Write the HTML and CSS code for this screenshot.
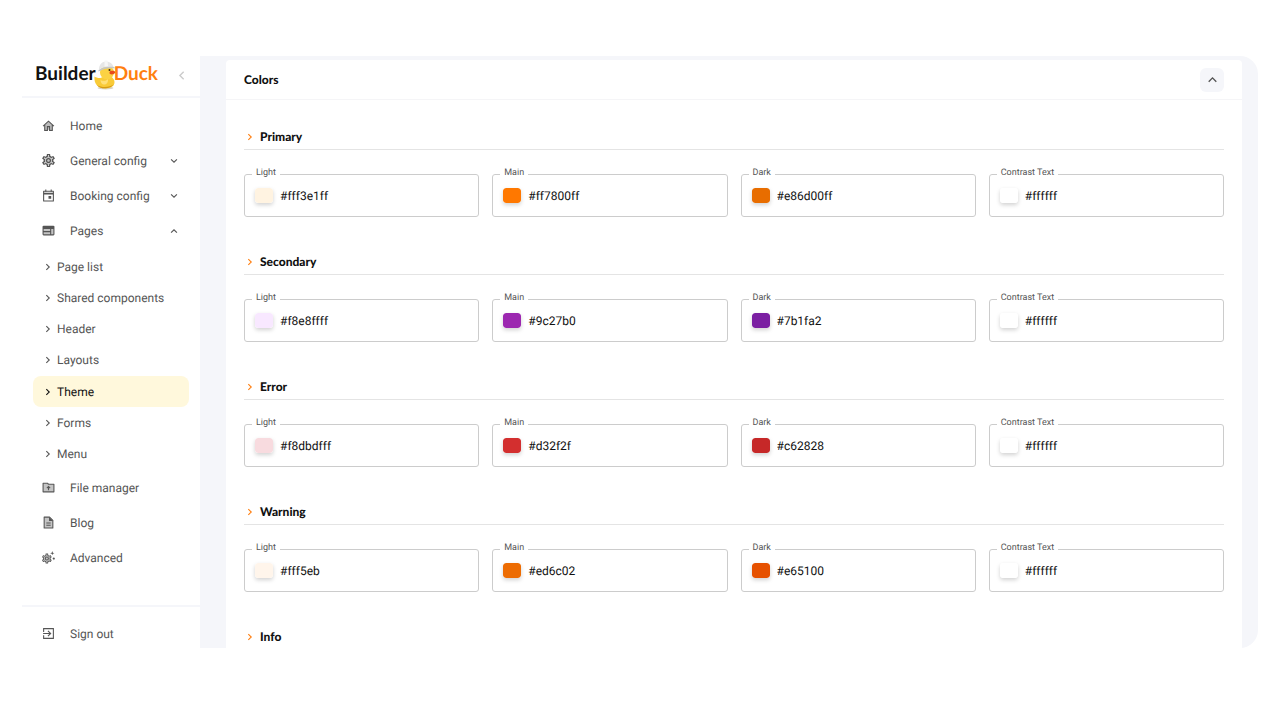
FILE: index.html
```
<!DOCTYPE html>
<html lang="en">
<head>
    <meta charset="UTF-8">
    <meta name="viewport" content="width=device-width, initial-scale=1.0">
    <title>BuilderDuck - Theme</title>
    <link rel="stylesheet" href="styles.css">
</head>
<body>
    <svg class="sprite" aria-hidden="true">
        <symbol id="chevron" viewBox="0 0 24 24">
            <path d="M8 5l7 7-7 7" fill="none" stroke="currentColor" stroke-width="2.600"/>
        </symbol>
        <symbol id="gear" viewBox="0 0 24 24">
            <path fill="currentColor" d="M19.43 12.98c.04-.32.07-.64.07-.98 0-.34-.03-.66-.07-.98l2.11-1.65c.19-.15.24-.42.12-.64l-2-3.46c-.09-.16-.26-.25-.44-.25-.06 0-.12.01-.17.03l-2.49 1c-.52-.4-1.08-.73-1.69-.98l-.38-2.65C14.46 2.18 14.25 2 14 2h-4c-.25 0-.46.18-.49.42l-.38 2.65c-.61.25-1.17.59-1.69.98l-2.49-1c-.06-.02-.12-.03-.18-.03-.17 0-.34.09-.43.25l-2 3.46c-.13.22-.07.49.12.64l2.11 1.65c-.04.32-.07.65-.07.98 0 .33.03.66.07.98l-2.11 1.65c-.19.15-.24.42-.12.64l2 3.46c.09.16.26.25.44.25.06 0 .12-.01.17-.03l2.49-1c.52.4 1.08.73 1.69.98l.38 2.65c.03.24.24.42.49.42h4c.25 0 .46-.18.49-.42l.38-2.65c.61-.25 1.17-.59 1.69-.98l2.49 1c.06.02.12.03.18.03.17 0 .34-.09.43-.25l2-3.46c.12-.22.07-.49-.12-.64l-2.11-1.65zm-1.98-1.71c.04.31.05.52.05.73 0 .21-.02.43-.05.73l-.14 1.13.89.7 1.08.84-.7 1.21-1.27-.51-1.04-.42-.9.68c-.43.32-.84.56-1.25.73l-1.06.43-.16 1.13-.2 1.35h-1.4l-.19-1.35-.16-1.13-1.06-.43c-.43-.18-.83-.41-1.23-.71l-.91-.7-1.06.43-1.27.51-.7-1.21 1.08-.84.89-.7-.14-1.13c-.03-.31-.05-.54-.05-.74s.02-.43.05-.73l.14-1.13-.89-.7-1.08-.84.7-1.21 1.27.51 1.04.42.9-.68c.43-.32.84-.56 1.25-.73l1.06-.43.16-1.13.2-1.35h1.39l.19 1.35.16 1.13 1.06.43c.43.18.83.41 1.23.71l.91.7 1.06-.43 1.27-.51.7 1.21-1.07.85-.89.7.14 1.13zM12 8c-2.21 0-4 1.79-4 4s1.79 4 4 4 4-1.79 4-4-1.79-4-4-4zm0 6c-1.1 0-2-.9-2-2s.9-2 2-2 2 .9 2 2-.9 2-2 2z"/>
        </symbol>
    </svg>

    <div class="app">
        <aside class="sidebar">
            <div class="brand">
                <a class="logo" href="#" aria-label="BuilderDuck">
                    <span>Builder</span>
                    <svg class="duck" viewBox="0 0 44 60" aria-hidden="true">
                        <ellipse cx="23" cy="56" rx="16" ry="3" fill="#d9d4c4"/>
                        <path d="M1 33c5 3 10 4 14 2l20-1c6 4 8 11 4 17-6 7-25 8-32 1C2 47 0 40 1 33z" fill="#f9cb38"/>
                        <path d="M6 50c9 6 26 5 33-1-5 9-27 11-33 1z" fill="#d49a17"/>
                        <path d="M13 40c5 3 11 2 15-2 1 7-3 11-8 11-4 0-7-4-7-9z" fill="#ffe078"/>
                        <circle cx="26" cy="25" r="14" fill="#fbd243"/>
                        <path d="M33 22c4-1 8 0 10 2-1 4-7 6-11 4-2-2-1-5 1-6z" fill="#e8491d"/>
                        <circle cx="31" cy="20" r="2" fill="#38250c"/>
                        <path d="M10 19C10 9 16 3 24 3c8 0 14 5 15 12-8-2-19-1-29 4z" fill="#e6e6e6"/>
                        <path d="M9 20c8-6 21-8 32-6v3c-11-2-22 0-32 6z" fill="#c4c6c8"/>
                        <path d="M21 1h6l1 11-7 1z" fill="#f6f6f6"/>
                    </svg>
                    <span class="logo-accent">Duck</span>
                </a>
                <button class="collapse" type="button" aria-label="Collapse menu">
                    <svg class="chevron left" aria-hidden="true"><use href="#chevron"/></svg>
                </button>
            </div>

            <nav class="menu">
                <a class="menu-item" href="#">
                    <svg class="icon" viewBox="0 0 24 24" aria-hidden="true">
                        <path d="M12 4l7 6v10H5V10z" fill="#bbb"/>
                        <path d="M2 13L12 4l10 9M5 10v11h5v-7h4v7h5V10" fill="none" stroke="currentColor" stroke-width="2"/>
                    </svg>
                    Home
                </a>
                <button class="menu-item" type="button" aria-expanded="false">
                    <svg class="icon" viewBox="2 2 20 20" aria-hidden="true">
                        <circle cx="12" cy="12" r="7" fill="#c4c4c4"/>
                        <use href="#gear" width="24" height="24"/>
                    </svg>
                    General config
                    <svg class="chevron down" aria-hidden="true"><use href="#chevron"/></svg>
                </button>
                <button class="menu-item" type="button" aria-expanded="false">
                    <svg class="icon" viewBox="0 0 24 24" aria-hidden="true">
                        <path d="M3 4h18v18H3z" fill="none" stroke="currentColor" stroke-width="2" stroke-linejoin="round"/>
                        <path d="M3 7h18v3H3zM6 1h2v4H6zM16 1h2v4h-2zM12 13h5v5h-5z" fill="currentColor"/>
                    </svg>
                    Booking config
                    <svg class="chevron down" aria-hidden="true"><use href="#chevron"/></svg>
                </button>
                <button class="menu-item" type="button" aria-expanded="true">
                    <svg class="icon" viewBox="0 0 24 24" aria-hidden="true">
                        <rect x="1" y="3" width="22" height="18" rx="2" fill="currentColor"/>
                        <path d="M3 9h12v4H3zM3 15h12v4H3zM17 9h4v10h-4z" fill="#c4c4c4"/>
                    </svg>
                    Pages
                    <svg class="chevron up" aria-hidden="true"><use href="#chevron"/></svg>
                </button>
                <div class="submenu">
                    <a class="submenu-item" href="#"><svg class="chevron" aria-hidden="true"><use href="#chevron"/></svg>Page list</a>
                    <a class="submenu-item" href="#"><svg class="chevron" aria-hidden="true"><use href="#chevron"/></svg>Shared components</a>
                    <a class="submenu-item" href="#"><svg class="chevron" aria-hidden="true"><use href="#chevron"/></svg>Header</a>
                    <a class="submenu-item" href="#"><svg class="chevron" aria-hidden="true"><use href="#chevron"/></svg>Layouts</a>
                    <a class="submenu-item active" href="#" aria-current="page"><svg class="chevron" aria-hidden="true"><use href="#chevron"/></svg>Theme</a>
                    <a class="submenu-item" href="#"><svg class="chevron" aria-hidden="true"><use href="#chevron"/></svg>Forms</a>
                    <a class="submenu-item" href="#"><svg class="chevron" aria-hidden="true"><use href="#chevron"/></svg>Menu</a>
                </div>
                <a class="menu-item" href="#">
                    <svg class="icon" viewBox="0 0 24 24" aria-hidden="true">
                        <path d="M2 4h8l2 2h10v14H2z" fill="#c4c4c4" stroke="currentColor" stroke-width="2" stroke-linejoin="round"/>
                        <path d="M12 17v-6M9 13l3-3 3 3" fill="none" stroke="currentColor" stroke-width="2"/>
                    </svg>
                    File manager
                </a>
                <a class="menu-item" href="#">
                    <svg class="icon" viewBox="0 0 24 24" aria-hidden="true">
                        <path d="M4 2h10l6 6v14H4z" fill="#c4c4c4" stroke="currentColor" stroke-width="2" stroke-linejoin="round"/>
                        <path d="M13 2v7h7zM8 12h8v2H8zM8 16h8v2H8z" fill="currentColor"/>
                    </svg>
                    Blog
                </a>
                <a class="menu-item" href="#">
                    <svg class="icon" viewBox="0 0 24 24" aria-hidden="true">
                        <circle cx="9" cy="14" r="6" fill="#c4c4c4"/>
                        <use href="#gear" x="-2" y="3" width="22" height="22"/>
                        <path d="M19 0l1 3 3 1-3 1-1 3-1-3-3-1 3-1zM22 11l1 2 1 1-1 1-1 2-1-2-2-1 2-1z" fill="currentColor"/>
                    </svg>
                    Advanced
                </a>
            </nav>

            <div class="sidebar-footer">
                <a class="menu-item" href="#">
                    <svg class="icon" viewBox="0 0 24 24" aria-hidden="true">
                        <path d="M3 9V3h18v18H3v-6" fill="none" stroke="currentColor" stroke-width="2"/>
                        <path d="M2 12h13M11 7l5 5-5 5" fill="none" stroke="currentColor" stroke-width="2"/>
                    </svg>
                    Sign out
                </a>
            </div>
        </aside>

        <main class="content">
            <section class="card">
                <header class="card-header">
                    <h2>Colors</h2>
                    <button class="toggle" type="button" aria-label="Collapse colors">
                        <svg class="chevron up" aria-hidden="true"><use href="#chevron"/></svg>
                    </button>
                </header>

                <div class="card-body">
                    <section class="palette">
                        <h3><svg class="chevron" aria-hidden="true"><use href="#chevron"/></svg>Primary</h3>
                        <div class="fields">
                            <div class="field">
                                <label for="primary-light">Light</label>
                                <input type="color" value="#fff3e1" aria-label="Pick primary light">
                                <input type="text" id="primary-light" value="#fff3e1ff">
                            </div>
                            <div class="field">
                                <label for="primary-main">Main</label>
                                <input type="color" value="#ff7800" aria-label="Pick primary main">
                                <input type="text" id="primary-main" value="#ff7800ff">
                            </div>
                            <div class="field">
                                <label for="primary-dark">Dark</label>
                                <input type="color" value="#e86d00" aria-label="Pick primary dark">
                                <input type="text" id="primary-dark" value="#e86d00ff">
                            </div>
                            <div class="field">
                                <label for="primary-contrast">Contrast Text</label>
                                <input type="color" value="#ffffff" aria-label="Pick primary contrast text">
                                <input type="text" id="primary-contrast" value="#ffffff">
                            </div>
                        </div>
                    </section>

                    <section class="palette">
                        <h3><svg class="chevron" aria-hidden="true"><use href="#chevron"/></svg>Secondary</h3>
                        <div class="fields">
                            <div class="field">
                                <label for="secondary-light">Light</label>
                                <input type="color" value="#f8e8ff" aria-label="Pick secondary light">
                                <input type="text" id="secondary-light" value="#f8e8ffff">
                            </div>
                            <div class="field">
                                <label for="secondary-main">Main</label>
                                <input type="color" value="#9c27b0" aria-label="Pick secondary main">
                                <input type="text" id="secondary-main" value="#9c27b0">
                            </div>
                            <div class="field">
                                <label for="secondary-dark">Dark</label>
                                <input type="color" value="#7b1fa2" aria-label="Pick secondary dark">
                                <input type="text" id="secondary-dark" value="#7b1fa2">
                            </div>
                            <div class="field">
                                <label for="secondary-contrast">Contrast Text</label>
                                <input type="color" value="#ffffff" aria-label="Pick secondary contrast text">
                                <input type="text" id="secondary-contrast" value="#ffffff">
                            </div>
                        </div>
                    </section>

                    <section class="palette">
                        <h3><svg class="chevron" aria-hidden="true"><use href="#chevron"/></svg>Error</h3>
                        <div class="fields">
                            <div class="field">
                                <label for="error-light">Light</label>
                                <input type="color" value="#f8dbdf" aria-label="Pick error light">
                                <input type="text" id="error-light" value="#f8dbdfff">
                            </div>
                            <div class="field">
                                <label for="error-main">Main</label>
                                <input type="color" value="#d32f2f" aria-label="Pick error main">
                                <input type="text" id="error-main" value="#d32f2f">
                            </div>
                            <div class="field">
                                <label for="error-dark">Dark</label>
                                <input type="color" value="#c62828" aria-label="Pick error dark">
                                <input type="text" id="error-dark" value="#c62828">
                            </div>
                            <div class="field">
                                <label for="error-contrast">Contrast Text</label>
                                <input type="color" value="#ffffff" aria-label="Pick error contrast text">
                                <input type="text" id="error-contrast" value="#ffffff">
                            </div>
                        </div>
                    </section>

                    <section class="palette">
                        <h3><svg class="chevron" aria-hidden="true"><use href="#chevron"/></svg>Warning</h3>
                        <div class="fields">
                            <div class="field">
                                <label for="warning-light">Light</label>
                                <input type="color" value="#fff5eb" aria-label="Pick warning light">
                                <input type="text" id="warning-light" value="#fff5eb">
                            </div>
                            <div class="field">
                                <label for="warning-main">Main</label>
                                <input type="color" value="#ed6c02" aria-label="Pick warning main">
                                <input type="text" id="warning-main" value="#ed6c02">
                            </div>
                            <div class="field">
                                <label for="warning-dark">Dark</label>
                                <input type="color" value="#e65100" aria-label="Pick warning dark">
                                <input type="text" id="warning-dark" value="#e65100">
                            </div>
                            <div class="field">
                                <label for="warning-contrast">Contrast Text</label>
                                <input type="color" value="#ffffff" aria-label="Pick warning contrast text">
                                <input type="text" id="warning-contrast" value="#ffffff">
                            </div>
                        </div>
                    </section>

                    <section class="palette">
                        <h3><svg class="chevron" aria-hidden="true"><use href="#chevron"/></svg>Info</h3>
                    </section>
                </div>
            </section>
        </main>
    </div>
</body>
</html>
```

FILE: styles.css
```
* {
    box-sizing: border-box;
}
body {
    margin: 0;
    height: 100vh;
    padding: 56px 22px 72px;
    background-color: #fff;
    font-family: Roboto, "Liberation Sans", sans-serif;
    font-size: 12px;
    text-rendering: geometricPrecision;
    color: #111;
}
a {
    color: inherit;
    text-decoration: none;
}
button {
    border: none;
    background: none;
    font: inherit;
    text-rendering: inherit;
    color: inherit;
    cursor: pointer;
}
.sprite {
    display: none;
}
.app {
    display: flex;
    height: 100%;
    border-radius: 18px;
    overflow: hidden;
}

/* Sidebar */
.sidebar {
    display: flex;
    flex-direction: column;
    width: 178px;
    flex-shrink: 0;
    color: #555;
}
.brand {
    display: flex;
    align-items: center;
    justify-content: space-between;
    height: 42px;
    padding: 0 12px 2px 13px;
    border-bottom: 2px solid #f5f6fa;
}
.logo {
    display: flex;
    align-items: center;
    font-family: Lato, "Liberation Sans", sans-serif;
    font-size: 19px;
    line-height: 20px;
    font-weight: bold;
    color: #111;
}
.logo span {
    padding-bottom: 2px;
}
.logo-accent {
    color: #ff7f11;
}
.duck {
    width: 22px;
    height: 30px;
    margin: 0 -2px;
}
.collapse {
    display: flex;
    padding: 0;
    color: #ccc;
}
.menu {
    flex: 1;
    padding: 10px 11px 0;
}
.menu-item {
    display: flex;
    align-items: center;
    width: 100%;
    height: 35px;
    padding: 0 10px 0 9px;
    text-align: left;
}
.icon {
    width: 13px;
    height: 13px;
    margin-right: 15px;
}
.chevron {
    width: 10px;
    height: 10px;
    flex-shrink: 0;
}
.chevron.down {
    margin-left: auto;
    transform: rotate(90deg);
}
.chevron.up {
    margin-left: auto;
    transform: rotate(-90deg);
}
.chevron.left {
    width: 13px;
    height: 13px;
    transform: rotate(180deg);
}
.submenu {
    display: grid;
    grid-auto-rows: 1fr;
    height: 219px;
    margin-top: 3px;
}
.submenu-item {
    display: flex;
    align-items: center;
    gap: 4px;
    padding: 0 10px;
    border-radius: 8px;
}
.submenu-item.active {
    background-color: #fff8dc;
    color: #111;
}
.sidebar-footer {
    padding: 9px 11px 0;
    height: 43px;
    border-top: 2px solid #f5f6fa;
}

/* Content */
.content {
    display: flex;
    flex: 1;
    min-width: 0;
    padding: 4px 16px 0 26px;
    background-color: #f5f6fa;
    overflow: hidden;
}
.card {
    flex: 1;
    background-color: #fff;
    border-radius: 4px 4px 0 0;
}
.card-header {
    display: flex;
    align-items: center;
    justify-content: space-between;
    height: 40px;
    padding: 0 18px;
    border-bottom: 1px solid #f5f5f7;
}
h2, h3 {
    margin: 0;
    font-family: Lato, "Liberation Sans", sans-serif;
    font-size: 12px;
    font-weight: 900;
}
.toggle {
    display: flex;
    align-items: center;
    justify-content: center;
    width: 24px;
    height: 24px;
    padding: 0;
    border-radius: 6px;
    background-color: #f5f6fa;
    color: #555;
}
.toggle .chevron {
    width: 13px;
    height: 13px;
    margin: 0;
}
.card-body {
    padding: 24px 18px 0;
}
.palette {
    height: 125px;
}
.palette h3 {
    display: flex;
    align-items: center;
    gap: 5px;
    height: 26px;
    border-bottom: 1px solid #e4e4e4;
}
.palette h3 .chevron {
    color: #ff7f11;
    margin-left: 1px;
}
.fields {
    display: grid;
    grid-template-columns: repeat(4, 1fr);
    gap: 13px;
    margin-top: 24px;
}
.field {
    position: relative;
    display: flex;
    align-items: center;
    gap: 7px;
    height: 43px;
    padding: 0 10px;
    border: 1px solid #ccc;
    border-radius: 3px;
}
.field label {
    position: absolute;
    top: -7px;
    left: 7px;
    padding: 0 4px;
    background-color: #fff;
    font-size: 9px;
    line-height: 11px;
    color: #555;
}
.field input {
    border: none;
    padding: 0;
}
.field input[type="color"] {
    appearance: none;
    width: 18px;
    height: 15px;
    flex-shrink: 0;
    border-radius: 3px;
    background: none;
    box-shadow: 0 2px 4px rgba(0, 0, 0, 0.18);
}
.field input[type="color"]::-webkit-color-swatch-wrapper {
    padding: 0;
}
.field input[type="color"]::-webkit-color-swatch {
    border: none;
    border-radius: 3px;
}
.field input[type="text"] {
    flex: 1;
    min-width: 0;
    font: inherit;
    text-rendering: inherit;
    color: #111;
    background: none;
    outline: none;
}
```
